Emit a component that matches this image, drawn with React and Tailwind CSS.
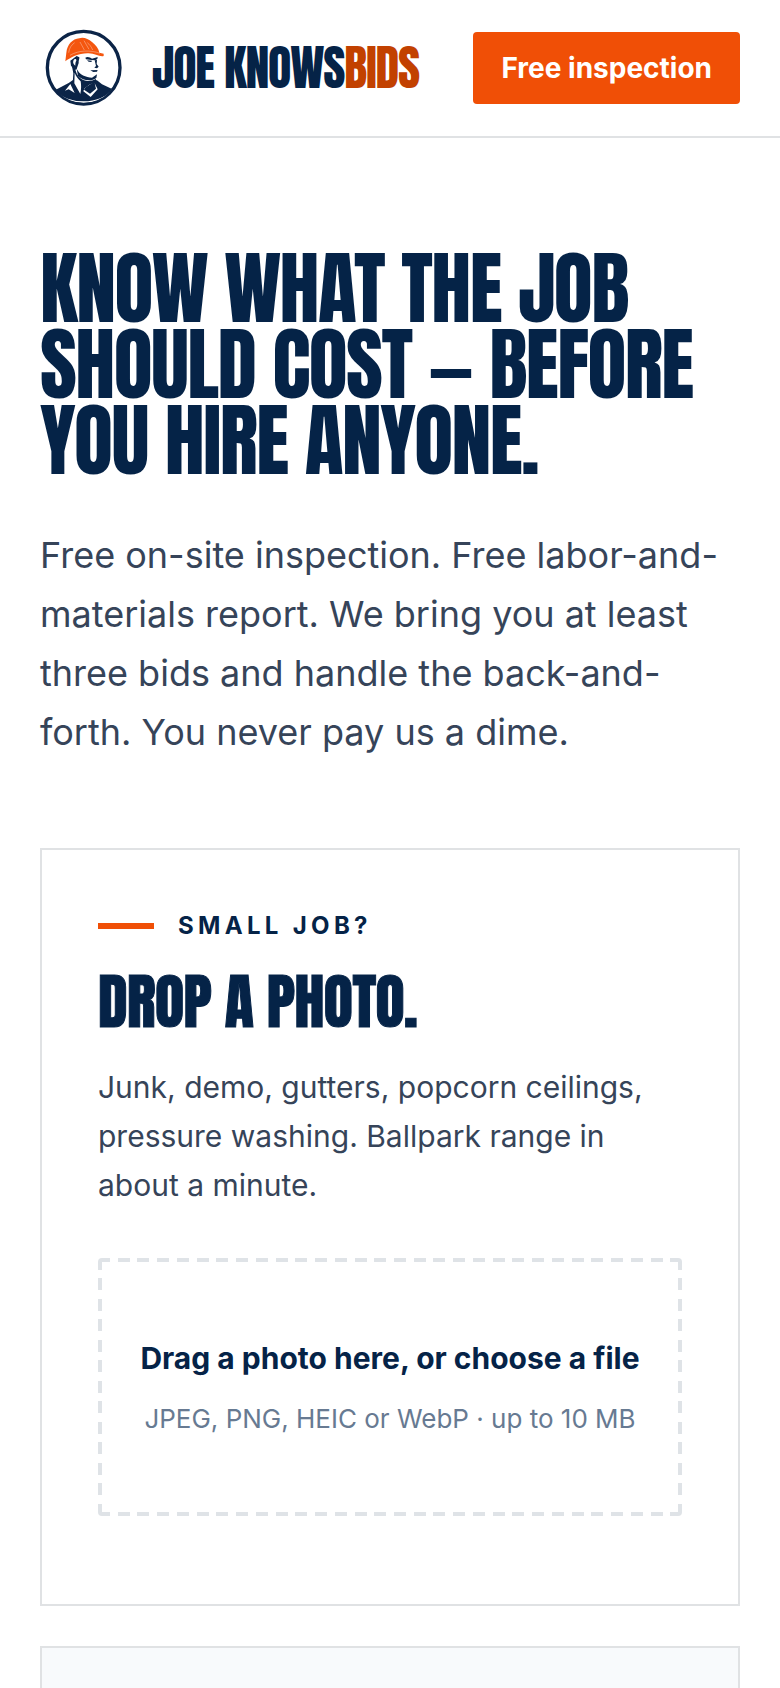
function Logo() {
  return (
    <svg viewBox="12 12 264 264" className="h-22 w-22 shrink-0" role="img" aria-label="Joe Knows Bids">
      <defs>
        <clipPath id="logo-disc">
          <circle cx="143" cy="143" r="106" />
        </clipPath>
      </defs>
      <circle cx="143" cy="143" r="109" fill="#fff" stroke="#0b2447" strokeWidth="10" />
      <g clipPath="url(#logo-disc)">
        {/* shirt and neck shadow */}
        <path d="M58 210 L98 189 L112 179 L134 222 L150 201 L168 190 L182 180 L198 193 L230 208 L230 254 L58 254 Z" fill="#0b2447" />
        <path d="M106 130 L114 134 L119 152 C124 168 134 178 150 182 C160 184 170 182 180 177 L180 186 L160 194 L146 205 L132 236 L110 192 L112 160 Z" fill="#0b2447" />
        <path d="M116 158 C120 170 128 178 134 184 C136 196 136 208 133 222 L115 190 Z" fill="#fff" />
        {/* collar */}
        <path d="M103 192 L116 219 L98 208 L87 212 Z" fill="#fff" />
        <path d="M144 209 L162 221 L180 206 L176 190 L185 208 L164 231 L142 214 Z" fill="#fff" />
        <path d="M58 212 C86 257 198 259 230 208" fill="none" stroke="#fff" strokeWidth="4" />
      </g>
      {/* face */}
      <path d="M114 112 L150 102 L185 106 L184 124 L188 139 L184 144 L185 156 L181 169 L172 175 L148 171 C132 165 124 152 121 140 L114 130 Z" fill="#fff" />
      <path d="M103 122 L122 108 L130 112 C131 118 127 121 128 129 C126 135 124 140 122 148 L116 150 L105 137 Z" fill="#0b2447" />
      <path d="M112 122 C115 115 122 116 121 122 C118 126 118 130 118 137 C113 133 110 128 112 122 Z" fill="#fff" />
      <path d="M148 113 C155 109 162 112 168 116 L185 111 L184 117 L178 121 L166 120 L150 118 Z" fill="#0b2447" />
      <path d="M153 121 L168 122 L166 126 L158 125 Z M176 121 L183 120 L182 132 L188 140 L183 145 L175 143 L180 138 Z" fill="#0b2447" />
      <path d="M163 151 L185 150 L183 155 L172 156 Z" fill="#0b2447" />
      <path d="M122 146 C130 164 150 172 168 173 L183 163 L181 174 C166 186 140 182 126 168 Z" fill="#0b2447" />
      {/* hard hat */}
      <path d="M88 124 L91 98 C94 73 109 57 130 55 C142 50 157 57 168 66 C180 75 188 87 190 98 L203 101 L203 108 C191 111 177 101 158 100 C129 99 104 112 88 124 Z" fill="#f4560f" />
      <path d="M98 98 C100 84 106 75 116 68 M145 90 L132 66 M159 88 L144 62 M170 90 C166 80 161 74 154 68 M102 106 C128 90 164 90 192 100" fill="none" stroke="#fff" strokeWidth="2" strokeOpacity="0.5" />
    </svg>
  );
}

function Header() {
  return (
    <header className="flex items-center justify-between border-b-2 border-[#e0e2e4] px-10 py-6">
      <a href="#" className="flex items-center gap-6">
        <Logo />
        <span className="font-['Anton',sans-serif] text-[48px] leading-[72px] tracking-tight whitespace-nowrap uppercase">
          Joe Knows<span className="text-[#c24100]">Bids</span>
        </span>
      </a>
      <button type="button" className="h-18 rounded bg-[#f04f06] px-7 text-[28px] font-bold whitespace-nowrap text-white">
        Free inspection
      </button>
    </header>
  );
}

function DropZone() {
  return (
    <label className="mt-12 flex h-[258px] cursor-pointer flex-col items-center justify-center gap-4 rounded text-center [background:repeating-linear-gradient(to_right,#dfe3e7_0_12px,transparent_12px_calc((100%_+_8px)/30))_top/100%_4px_no-repeat,repeating-linear-gradient(to_right,#dfe3e7_0_12px,transparent_12px_calc((100%_+_8px)/30))_bottom/100%_4px_no-repeat,repeating-linear-gradient(to_bottom,#dfe3e7_0_12px,transparent_12px_calc((100%_+_8px)/13))_left/4px_100%_no-repeat,repeating-linear-gradient(to_bottom,#dfe3e7_0_12px,transparent_12px_calc((100%_+_8px)/13))_right/4px_100%_no-repeat]">
      <input type="file" accept="image/*" className="sr-only" />
      <span className="text-[30px] leading-[48px] font-bold">Drag a photo here, or choose a file</span>
      <span className="text-[26px] leading-[42px] text-[#677a92]">JPEG, PNG, HEIC or WebP · up to 10 MB</span>
    </label>
  );
}

function PhotoCard() {
  return (
    <section className="border-2 border-[#e0e2e4] px-14 pt-14 pb-22">
      <div className="flex items-center gap-6">
        <span className="h-[6px] w-14 bg-[#f04f06]" />
        <span className="text-[24px] leading-[39px] font-bold tracking-[0.18em] uppercase">Small job?</span>
      </div>
      <h2 className="mt-6 font-['Anton',sans-serif] text-[60px] leading-[66px] tracking-[-0.01em] uppercase [-webkit-text-stroke:1px]">Drop a photo.</h2>
      <p className="mt-7 text-[30px] leading-[49px] text-[#364459]">
        Junk, demo, gutters, popcorn ceilings, pressure washing. Ballpark range in about a minute.
      </p>
      <DropZone />
    </section>
  );
}

export default function App() {
  return (
    <div className="h-screen overflow-hidden bg-white font-['Inter',sans-serif] text-[#052347]">
      <Header />
      <main className="px-10 pt-28">
        <h1 className="font-['Anton',sans-serif] text-[80px] leading-[76px] tracking-[-0.02em] uppercase">
          Know what the job should cost — before you hire anyone.
        </h1>
        <p className="mt-12 text-[36px] leading-[59px] text-[#364459]">
          Free on-site inspection. Free labor-and-materials report. We bring you at least three bids and handle the back-and-forth. You never pay us a dime.
        </p>
        <div className="mt-[86px] grid gap-10">
          <PhotoCard />
          <section className="h-96 border-2 border-[#e0e2e4] bg-[#f8fafc]" />
        </div>
      </main>
    </div>
  );
}
